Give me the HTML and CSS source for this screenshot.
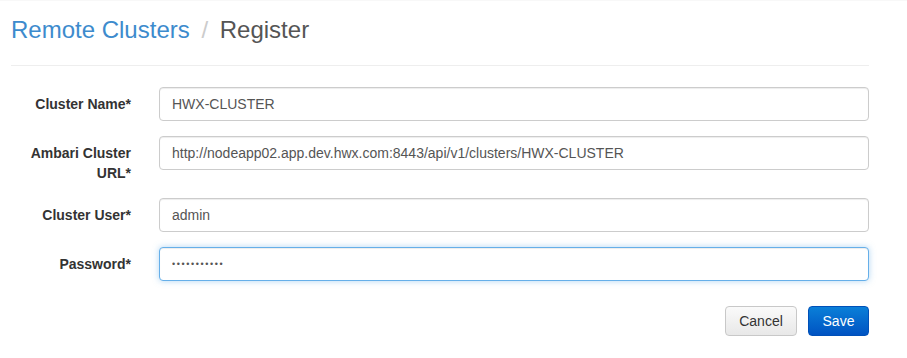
FILE: index.html
```html
<!DOCTYPE html>
<html lang="en">
<head>
  <meta charset="UTF-8">
  <meta name="viewport" content="width=device-width, initial-scale=1.0">
  <title>Register Remote Cluster</title>
  <link rel="stylesheet" href="styles.css">
</head>
<body>
  <div class="page">
    <div class="page-header">
      <h1>
        <a href="#" class="crumb">Remote Clusters</a>
        <span class="sep">/</span>
        <span class="current">Register</span>
      </h1>
    </div>

    <form class="form-horizontal">
      <div class="form-group">
        <label class="control-label" for="name">Cluster Name*</label>
        <input class="form-control" id="name" type="text" value="HWX-CLUSTER">
      </div>
      <div class="form-group">
        <label class="control-label" for="url">Ambari Cluster URL*</label>
        <input class="form-control" id="url" type="text" value="http://nodeapp02.app.dev.hwx.com:8443/api/v1/clusters/HWX-CLUSTER">
      </div>
      <div class="form-group">
        <label class="control-label" for="user">Cluster User*</label>
        <input class="form-control" id="user" type="text" value="admin">
      </div>
      <div class="form-group">
        <label class="control-label" for="password">Password*</label>
        <input class="form-control focused" id="password" type="password" value="hortonworks">
      </div>
      <div class="form-actions">
        <button type="button" class="btn btn-default">Cancel</button>
        <button type="submit" class="btn btn-primary">Save</button>
      </div>
    </form>
  </div>
</body>
</html>
```

FILE: styles.css
```css
* {
  box-sizing: border-box;
}

body {
  margin: 0;
  font-family: "Liberation Sans", Arial, Helvetica, sans-serif;
  font-size: 14px;
  line-height: 20px;
  color: #333;
  background: #fff;
  border-top: 1px solid #f8f8f8;
}

.page {
  width: 858px;
  margin-left: 11px;
}

.page-header {
  padding-top: 16px;
  padding-bottom: 22px;
  border-bottom: 1px solid #eee;
}

h1 {
  margin: 0;
  font-size: 24px;
  line-height: 26px;
  font-weight: normal;
}

.crumb {
  color: #3d8bcd;
  text-decoration: none;
}

.sep {
  color: #ccc;
  margin: 0 5px;
}

.current {
  color: #555;
}

.form-horizontal {
  margin-top: 21px;
}

.form-group {
  display: grid;
  grid-template-columns: 120px 1fr;
  column-gap: 28px;
  margin-bottom: 15px;
}

.control-label {
  padding-top: 7px;
  text-align: right;
  font-weight: bold;
  color: #333;
}

.form-control {
  height: 34px;
  width: 100%;
  padding: 6px 12px;
  font-family: inherit;
  font-size: 14px;
  line-height: 20px;
  color: #555;
  background: #fff;
  border: 1px solid #ccc;
  border-radius: 4px;
  box-shadow: inset 0 1px 1px rgba(0, 0, 0, 0.075);
  outline: none;
}

.form-control.focused {
  border-color: #66afe9;
  box-shadow: inset 0 1px 1px rgba(0, 0, 0, 0.075), 0 0 6px rgba(102, 175, 233, 0.5);
}

input[type="password"] {
  font-size: 9px;
  letter-spacing: 1.6px;
}

.form-actions {
  display: flex;
  justify-content: flex-end;
  gap: 11px;
  margin-top: 25px;
}

.btn {
  height: 30px;
  padding: 6px 12px;
  font-family: inherit;
  font-size: 14px;
  line-height: 16px;
  border-radius: 4px;
  cursor: pointer;
}

.btn-default {
  width: 72px;
  color: #333;
  background: linear-gradient(#fafafa, #e8e8e8);
  border: 1px solid #c8c8c8;
}

.btn-primary {
  width: 61px;
  color: #fff;
  background: linear-gradient(#0a7fd8, #0053c2);
  border: 1px solid #0050b8;
}
```
